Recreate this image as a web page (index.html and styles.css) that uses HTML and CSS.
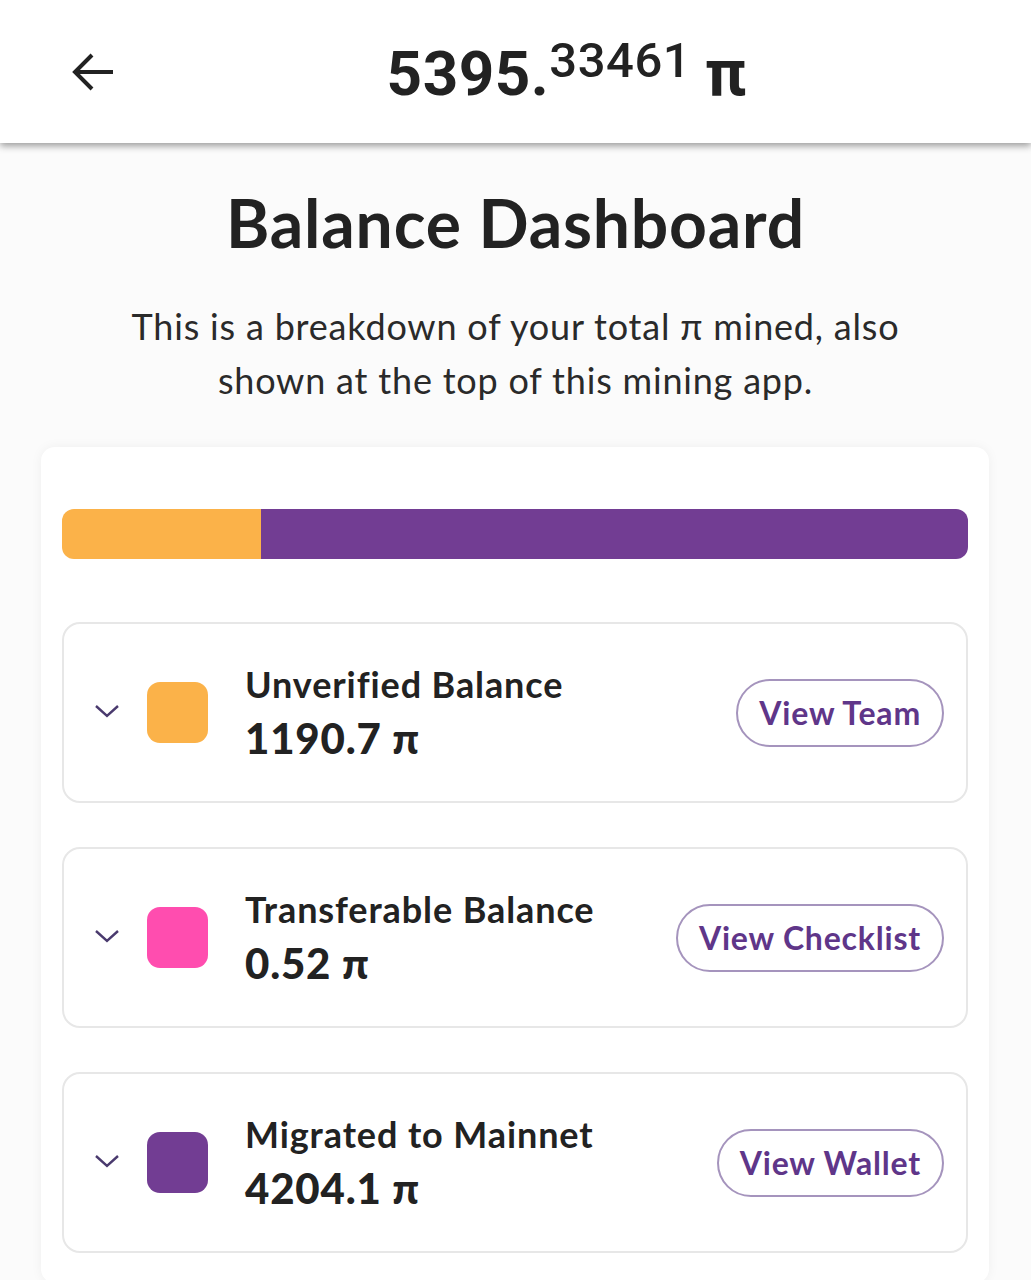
FILE: index.html
```html
<!DOCTYPE html>
<html lang="en">
<head>
<meta charset="utf-8">
<title>Balance Dashboard</title>
<link rel="stylesheet" href="styles.css">
</head>
<body>
<header class="topbar">
  <button class="back" aria-label="Back">
    <svg width="44" height="40" viewBox="0 0 44 40"><path d="M42 20H4M21 3L4 20l17 17" fill="none" stroke="#222" stroke-width="4" stroke-linecap="butt" stroke-linejoin="miter"/></svg>
  </button>
  <div class="total"><span class="int">5395.</span><span class="dec">33461</span><span class="pi">π</span></div>
</header>
<main class="content">
  <h1 class="title">Balance Dashboard</h1>
  <p class="desc">This is a breakdown of your total π mined, also shown at the top of this mining app.</p>
  <section class="card">
    <div class="bar">
      <div class="seg seg-orange" style="width:22%"></div>
      <div class="seg seg-pink" style="width:0.01%"></div>
      <div class="seg seg-purple"></div>
    </div>
    <div class="rows">
      <div class="row">
        <svg class="chev" width="26" height="16" viewBox="0 0 26 16"><path d="M2 3l11 10L24 3" fill="none" stroke="#4a3a6e" stroke-width="2.4"/></svg>
        <span class="swatch sw-orange"></span>
        <div class="info"><div class="label">Unverified Balance</div><div class="amount">1190.7 π</div></div>
        <button class="btn">View Team</button>
      </div>
      <div class="row">
        <svg class="chev" width="26" height="16" viewBox="0 0 26 16"><path d="M2 3l11 10L24 3" fill="none" stroke="#4a3a6e" stroke-width="2.4"/></svg>
        <span class="swatch sw-pink"></span>
        <div class="info"><div class="label">Transferable Balance</div><div class="amount">0.52 π</div></div>
        <button class="btn">View Checklist</button>
      </div>
      <div class="row">
        <svg class="chev" width="26" height="16" viewBox="0 0 26 16"><path d="M2 3l11 10L24 3" fill="none" stroke="#4a3a6e" stroke-width="2.4"/></svg>
        <span class="swatch sw-purple"></span>
        <div class="info"><div class="label">Migrated to Mainnet</div><div class="amount">4204.1 π</div></div>
        <button class="btn">View Wallet</button>
      </div>
    </div>
  </section>
</main>
</body>
</html>
```

FILE: styles.css
```css
html, body {
  margin: 0;
  padding: 0;
}
body {
  background: #fbfbfb;
  font-family: Lato, "Noto Sans", sans-serif;
  color: #222;
  overflow: hidden;
  height: 1280px;
}
.topbar {
  position: relative;
  height: 143px;
  background: #fff;
  box-shadow: 0 3px 7px rgba(0,0,0,0.38);
  display: flex;
  align-items: center;
  justify-content: center;
  padding-left: 102px;
  z-index: 2;
}
.back {
  position: absolute;
  left: 71px;
  top: 52px;
  padding: 0;
  border: 0;
  background: none;
  width: 44px;
  height: 40px;
}
.back svg { display: block; }
.total {
  font-family: Roboto, sans-serif;
  font-weight: 700;
  color: #222;
  display: flex;
  align-items: baseline;
  margin-top: 4px;
}
.total .int { font-size: 62px; letter-spacing: 0.5px; }
.total .dec { font-size: 49px; font-weight: 500; position: relative; top: -18px; letter-spacing: 0.5px; }
.total .pi { font-size: 64px; margin-left: 14px; }
.content {
  padding-top: 44px;
}
.title {
  margin: 0;
  text-align: center;
  font-size: 66px;
  font-weight: 700;
  line-height: 72px;
  letter-spacing: 0.8px;
  color: #222;
}
.desc {
  margin: 40px auto 0;
  width: 800px;
  text-align: center;
  font-size: 36px;
  line-height: 54px;
  letter-spacing: 0.8px;
  color: #2a2a2a;
}
.card {
  margin: 40px 42px 0 41px;
  background: #fff;
  border-radius: 14px;
  box-shadow: 0 0 12px rgba(0,0,0,0.05);
  padding: 62px 21px 30px 21px;
}
.bar {
  height: 50px;
  border-radius: 12px;
  overflow: hidden;
  display: flex;
}
.seg { height: 100%; }
.seg-orange { background: #fbb249; }
.seg-pink { background: #ff4daf; }
.seg-purple { background: #723d93; flex: 1; }
.rows {
  margin-top: 63px;
  display: flex;
  flex-direction: column;
  gap: 44px;
}
.row {
  height: 181px;
  box-sizing: border-box;
  border: 2px solid #e7e7e7;
  border-radius: 18px;
  display: flex;
  align-items: center;
  padding: 0 22px 0 30px;
  background: #fff;
}
.chev { flex: none; margin-top: -3px; }
.swatch {
  flex: none;
  width: 61px;
  height: 61px;
  border-radius: 13px;
  margin-left: 27px;
}
.sw-orange { background: #fbb249; }
.sw-pink { background: #ff4daf; }
.sw-purple { background: #723d93; }
.info {
  flex: 1;
  margin-left: 37px;
}
.label {
  font-size: 36px;
  font-weight: 700;
  line-height: 50px;
  color: #222;
  letter-spacing: 0.9px;
}
.amount {
  font-size: 42px;
  font-weight: 900;
  line-height: 58px;
  letter-spacing: 0.8px;
  color: #222;
}
.btn {
  flex: none;
  height: 68px;
  padding: 0 21px;
  border: 2px solid #a594bd;
  border-radius: 34px;
  background: #fff;
  color: #5f3689;
  font-family: Lato, "Noto Sans", sans-serif;
  font-weight: 700;
  font-size: 32px;
  letter-spacing: 0.8px;
}
```
